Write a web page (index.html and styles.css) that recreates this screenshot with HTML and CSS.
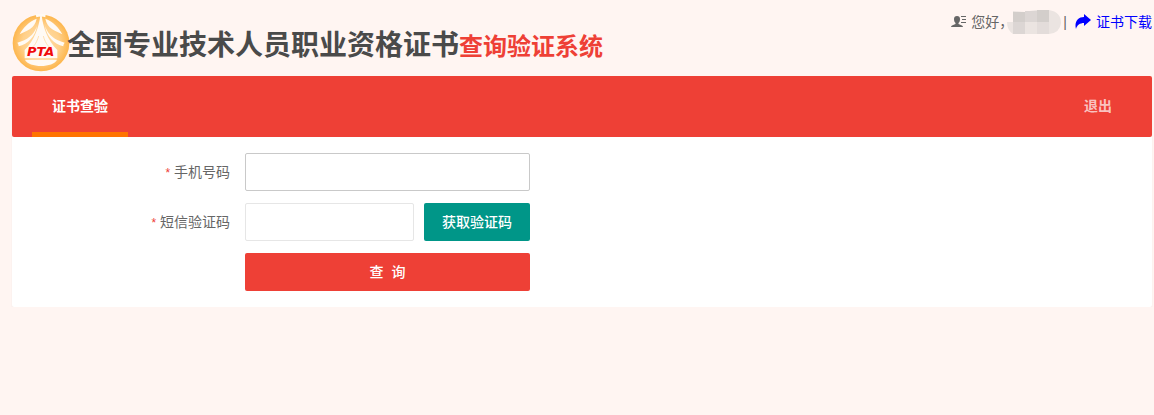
FILE: index.html
```html
<!DOCTYPE html>
<html lang="zh-CN">
<head>
<meta charset="utf-8">
<meta name="viewport" content="width=device-width, initial-scale=1">
<title>全国专业技术人员职业资格证书查询验证系统</title>
<link rel="stylesheet" href="styles.css">
</head>
<body>
<header class="header">
  <div class="brand">
    <svg class="logo" viewBox="0 0 174 174" role="img" aria-label="PTA">
      <defs>
        <radialGradient id="disc">
          <stop offset="0" stop-color="#ffe0ac"/>
          <stop offset=".65" stop-color="#ffd08a"/>
          <stop offset="1" stop-color="#fdb64d"/>
        </radialGradient>
      </defs>
      <circle cx="87" cy="87" r="85" fill="url(#disc)"/>
      <path class="logo-cut" d="M71 0H101L100 10Q87 5 73 10Z"/>
      <path class="logo-cut" d="M85 3C81 40 68 78 38 108V133H136V108C106 78 93 40 89 3Z"/>
      <path class="logo-cut" d="M74 14C68 44 44 50 23 61C34 40 50 24 74 14ZM100 14C106 44 130 50 151 61C140 40 124 24 100 14Z"/>
      <path class="logo-cut" d="M75 36C70 68 48 90 20 97C20 92 18 89 16 86C46 78 65 64 75 36ZM99 36C104 68 126 90 154 97C154 92 156 89 158 86C128 78 109 64 99 36Z"/>
      <path class="logo-shade" d="M80 66C75 84 68 94 60 101M94 66C99 84 106 94 114 101"/>
      <path class="logo-cut" d="M39 137H135C124 162 50 162 39 137Z"/>
      <text class="logo-text" x="86" y="126" text-anchor="middle">PTA</text>
    </svg>
    <h1 class="title">全国专业技术人员职业资格证书<span class="title-sub">查询验证系统</span></h1>
  </div>
  <div class="user">
    <svg class="user-icon" viewBox="0 0 16 14" aria-hidden="true">
      <path d="M6 1C8 1 9 2 9 4C9 6 8.500 7 7.500 8V9L11 10.500Q12 11 12 12H0Q0 11 1 10.500L4.500 9V8C3.500 7 3 6 3 4C3 2 4 1 6 1Z"/>
      <path d="M10 1H15V2H10ZM11 4H15V5H11ZM10 7H15V8H10Z"/>
    </svg>
    <span>您好，</span>
    <span class="user-name">
      <svg viewBox="0 0 54 24" aria-hidden="true">
        <path fill="#ebe4e1" d="M6 12V1L18 2Q30-1 42 0Q54 2 54 13Q53 23 42 24H6Q0 20 0 12Z"/>
        <path fill="#d3cecb" d="M6 2H18V12H6ZM30 0H42V12H30Z"/>
        <path fill="#dcd6d4" d="M18 1H30V12H18ZM6 12H18V24H6Z"/>
        <path fill="#e3dcda" d="M30 12H42V24H30Z"/>
      </svg>
    </span>
    <span>|</span>
    <a class="download" href="#download">
      <svg class="share-icon" viewBox="0 0 16 16" aria-hidden="true">
        <path d="M9 0L16 6L9 12V9C5 9 2 11 1 15C-1 8 3 3 9 3Z"/>
      </svg>
      证书下载
    </a>
  </div>
</header>
<main class="main">
  <nav class="nav">
    <a class="nav-link nav-link-active" href="#verify">证书查验</a>
    <a class="nav-link" href="#logout">退出</a>
  </nav>
  <form class="form">
    <label class="label" for="phone"><span class="required">*</span> 手机号码</label>
    <input class="input input-focus" id="phone" type="tel">
    <label class="label" for="code"><span class="required">*</span> 短信验证码</label>
    <div class="code-row">
      <input class="input" id="code" type="text">
      <button class="button button-code" type="button">获取验证码</button>
    </div>
    <button class="button button-submit" type="button">查&nbsp; 询</button>
  </form>
</main>
</body>
</html>
```
FILE: styles.css
```css
* {
  box-sizing: border-box;
}

body {
  margin: 0;
  padding: 0 2px 0 12px;
  background: #fff5f2;
  color: #666;
  font: 14px/24px "Liberation Sans", "Noto Sans CJK SC", sans-serif;
}

a {
  text-decoration: none;
}

.header {
  display: flex;
  justify-content: space-between;
  height: 76px;
}

.brand {
  display: flex;
  align-items: center;
  padding-top: 10px;
}

.logo {
  width: 58px;
  height: 58px;
  margin-right: -3px;
}

.logo-cut {
  fill: #fffaf4;
}

.logo-shade {
  fill: none;
  stroke: #ffe2b5;
  stroke-width: 3;
}

.logo-text {
  fill: #f00a0a;
  font: italic bold 39px "DejaVu Sans", sans-serif;
}

.title {
  margin: 0;
  padding-top: 6px;
  color: #4a4a4a;
  font-size: 28px;
  line-height: 40px;
  font-weight: bold;
  white-space: nowrap;
}

.title-sub {
  color: #ee4036;
  font-size: 24px;
}

.user {
  display: flex;
  align-items: center;
  height: 24px;
  margin-top: 10px;
  white-space: nowrap;
}

.user-icon {
  width: 16px;
  height: 14px;
  margin-right: 4px;
  fill: #666;
}

.user-name {
  display: flex;
  width: 54px;
  height: 24px;
  margin: 0 2px 0 -6px;
}

.download {
  display: flex;
  align-items: center;
  gap: 5px;
  margin-left: 8px;
  color: #00f;
}

.share-icon {
  width: 16px;
  height: 16px;
  fill: #00f;
}

.main {
  border-radius: 2px;
  background: #fff;
  box-shadow: 0 1px 2px rgba(0, 0, 0, .06);
}

.nav {
  display: flex;
  justify-content: space-between;
  padding: 0 20px;
  border-radius: 2px;
  background: #ee4036;
}

.nav-link {
  padding: 0 20px;
  color: rgba(255, 255, 255, .7);
  font-weight: bold;
  line-height: 61px;
}

.nav-link-active {
  box-shadow: inset 0 -5px #ff7300;
  color: #fff;
}

.form {
  display: grid;
  grid-template-columns: 218px 25%;
  grid-auto-rows: 38px;
  gap: 12px 15px;
  padding: 16px 0;
}

.label {
  text-align: right;
  line-height: 38px;
}

.required {
  color: #ee4036;
  font-size: 12px;
}

.input {
  width: 100%;
  min-width: 0;
  height: 38px;
  padding: 0 10px;
  border: 1px solid #e6e6e6;
  border-radius: 2px;
  background: #fff;
  font: inherit;
  outline: none;
}

.input-focus {
  border-color: #c9c9c9;
}

.code-row {
  display: flex;
  gap: 10px;
}

.button {
  height: 38px;
  padding: 0 18px;
  border: 0;
  border-radius: 2px;
  color: #fff;
  font: inherit;
  font-weight: 500;
  white-space: nowrap;
}

.button-code {
  background: #009688;
}

.button-submit {
  grid-column: 2;
  background: #ee4036;
}
```
